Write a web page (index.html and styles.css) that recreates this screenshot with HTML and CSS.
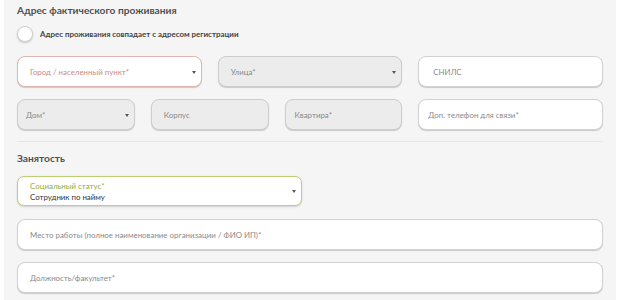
FILE: index.html
```html
<!DOCTYPE html>
<html lang="ru">
<head>
<meta charset="utf-8">
<link rel="stylesheet" href="styles.css">
</head>
<body>
<div class="panel">
  <h3 class="title">Адрес фактического проживания</h3>
  <label class="check"><span class="radio"></span><span class="check-text">Адрес проживания совпадает с адресом регистрации</span></label>

  <div class="grid3 row1">
    <div class="field select error"><span class="ph">Город / населенный пункт*</span><span class="caret"></span></div>
    <div class="field select disabled"><span class="ph">Улица*</span><span class="caret"></span></div>
    <div class="field pad-wide"><span class="ph">СНИЛС</span></div>
  </div>

  <div class="grid3 row2">
    <div class="sub3">
      <div class="field select disabled pad-narrow"><span class="ph">Дом*</span><span class="caret"></span></div>
      <div class="field disabled"><span class="ph">Корпус</span></div>
      <div class="field disabled pad-mid"><span class="ph">Квартира*</span></div>
    </div>
    <div class="field pad-mid"><span class="ph">Доп. телефон для связи*</span></div>
  </div>

  <div class="divider"></div>

  <h3 class="title title2">Занятость</h3>

  <div class="social">
    <div class="social-text">
      <span class="social-label">Социальный статус*</span>
      <span class="social-value">Сотрудник по найму</span>
    </div>
    <span class="caret"></span>
  </div>

  <div class="field wide w1"><span class="ph">Место работы (полное наименование организации / ФИО ИП)*</span></div>
  <div class="field wide w2"><span class="ph">Должность/факультет*</span></div>
</div>
</body>
</html>
```
FILE: styles.css
```css
html, body {
  margin: 0;
  padding: 0;
  background: #ffffff;
}
body {
  font-family: Lato, "Open Sans", "Liberation Sans", sans-serif;
  color: #444;
}
.panel {
  margin-left: 4px;
  width: 586px;
  height: 298px;
  padding: 3px 13px 0 13px;
  background: #f5f5f5;
  box-sizing: content-box;
  overflow: hidden;
}
.title {
  margin: 0;
  font-size: 10.2px;
  line-height: 14px;
  font-weight: 700;
  color: #505050;
}
.check {
  display: flex;
  align-items: center;
  margin-top: 9px;
  height: 16px;
}
.radio {
  width: 14px;
  height: 14px;
  border-radius: 50%;
  background: #fff;
  border: 1px solid #cfcfcf;
  box-shadow: 0 1px 2px rgba(0,0,0,0.2);
  flex: none;
}
.check-text {
  margin-left: 7px;
  font-size: 7.9px;
  font-weight: 700;
  color: #444;
}
.grid3 {
  display: grid;
  grid-template-columns: repeat(3, 1fr);
  column-gap: 16px;
}
.row1 { margin-top: 14px; }
.row2 { margin-top: 12px; }
.sub3 {
  grid-column: span 2;
  display: grid;
  grid-template-columns: repeat(3, 1fr);
  column-gap: 16px;
}
.field {
  position: relative;
  height: 31px;
  box-sizing: border-box;
  border: 1px solid #d2d2d2;
  border-radius: 8px;
  background: #fff;
  box-shadow: 0 1px 1px rgba(0,0,0,0.18);
  display: flex;
  align-items: center;
  padding: 0 12px;
}
.field.pad-narrow { padding-left: 8px; }
.field.pad-mid { padding-left: 9px; }
.field.pad-wide { padding-left: 14px; }
.field.disabled {
  background: #ececec;
  border-color: #cdcdcd;
}
.field.error {
  border-color: #dcb6b2;
}
.ph {
  font-size: 7.9px;
  color: #8a8a8a;
  white-space: nowrap;
}
.error .ph { color: #c98b86; }
.caret {
  position: absolute;
  right: 5px;
  top: 50%;
  margin-top: -1px;
  width: 0;
  height: 0;
  border-left: 2px solid transparent;
  border-right: 2px solid transparent;
  border-top: 3px solid #555;
}
.divider {
  margin-top: 11px;
  height: 1px;
  background: #e6e6e6;
}
.title2 { margin-top: 9px; }
.social {
  position: relative;
  margin-top: 11px;
  width: calc((100% - 16px) / 2);
  height: 30px;
  box-sizing: border-box;
  border: 1.5px solid #bccf72;
  border-radius: 7px;
  background: #fff;
  box-shadow: 0 1px 2px rgba(0,0,0,0.15);
  display: flex;
  align-items: center;
  padding: 1px 12px 0 12px;
}
.social-text {
  display: flex;
  flex-direction: column;
}
.social-label {
  font-size: 7.9px;
  line-height: 11px;
  color: #91ac3a;
}
.social-value {
  font-size: 7.9px;
  line-height: 11px;
  color: #333;
}
.w1 { margin-top: 13px; }
.w2 { margin-top: 12px; }
```
